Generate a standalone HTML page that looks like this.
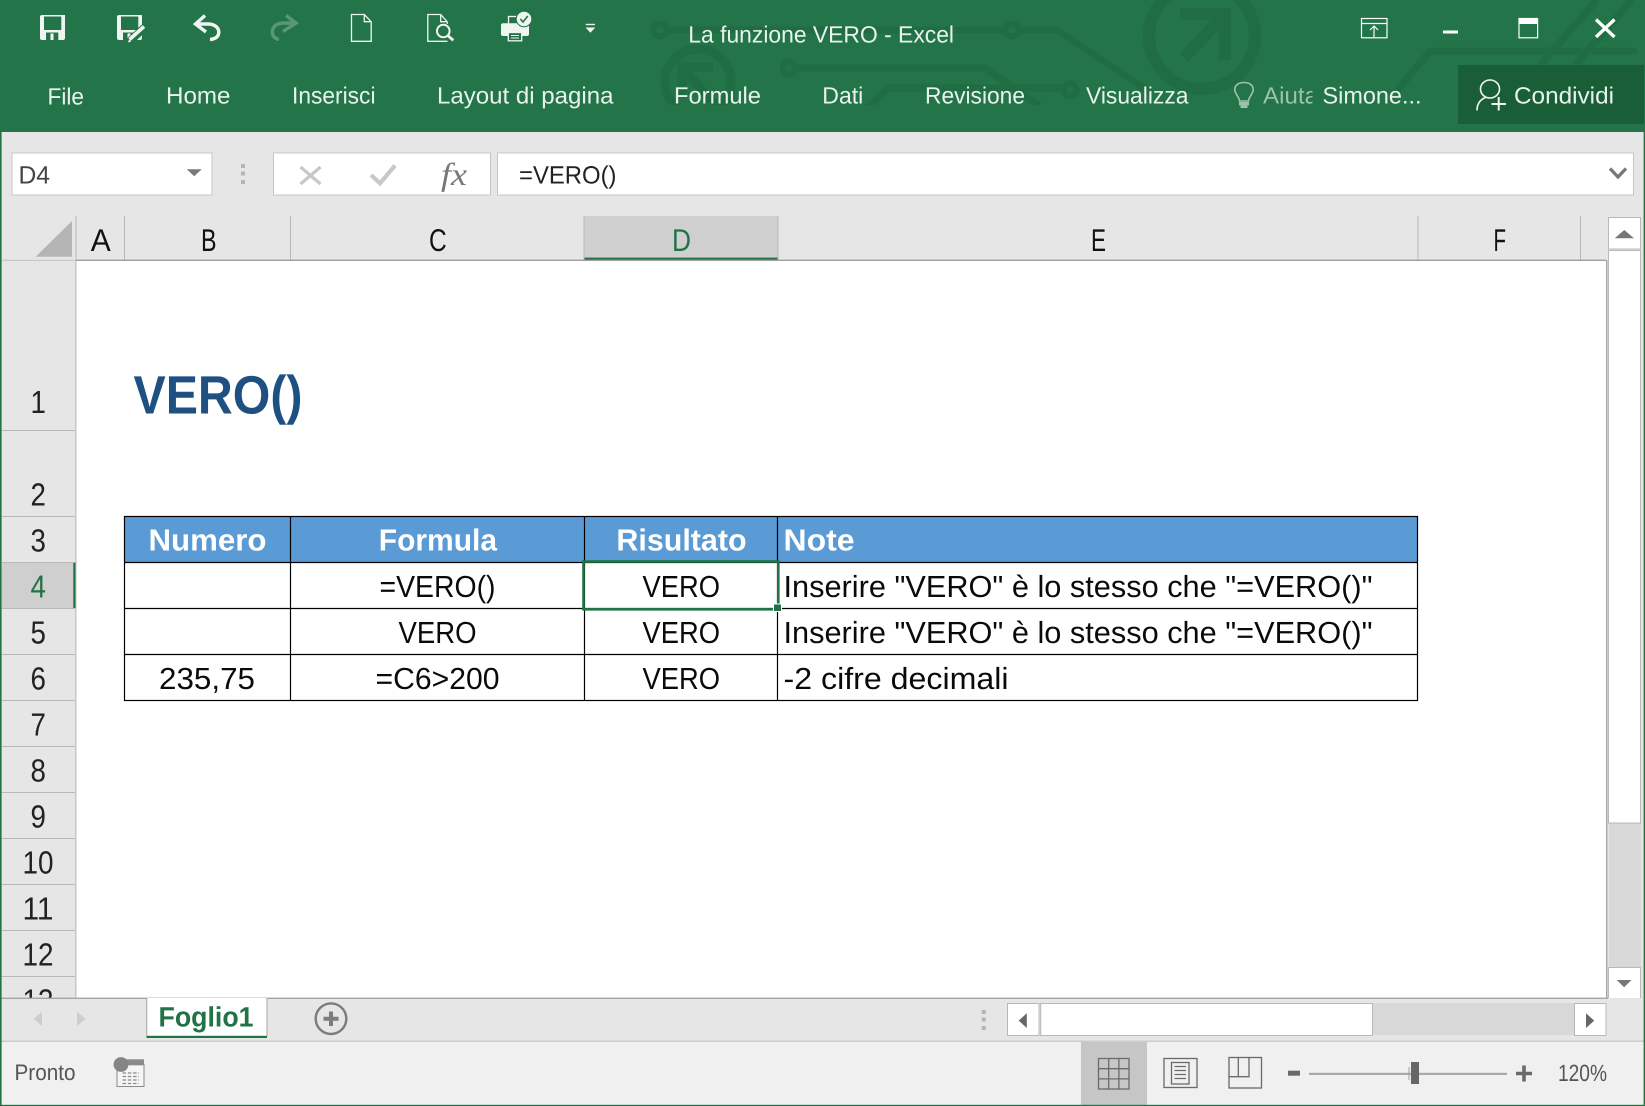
<!DOCTYPE html>
<html lang="it">
<head>
<meta charset="utf-8">
<title>La funzione VERO - Excel</title>
<style>
html,body{margin:0;padding:0;background:#e6e6e6;width:1645px;height:1106px;overflow:hidden}
svg{display:block}
text{font-family:"Liberation Sans",sans-serif;text-rendering:geometricPrecision;white-space:pre}
.rb{font-size:23.5px;fill:#e9f3ed}
.cell{font-size:30.5px;fill:#0a0a0a}
.hd{font-size:30.5px;font-weight:bold;fill:#fff}
.col{font-size:31.5px;fill:#111}
.row{font-size:32px;fill:#222}
</style>
</head>
<body>
<svg xmlns="http://www.w3.org/2000/svg" width="1645" height="1106" viewBox="0 0 1645 1106">
<defs>
<clipPath id="hdr"><rect x="0" y="0" width="1645" height="105"/></clipPath>
<clipPath id="rows"><rect x="0" y="260" width="76" height="738"/></clipPath>
<clipPath id="aiuta"><rect x="1260" y="70" width="52.5" height="50"/></clipPath>
</defs>

<!-- base -->
<rect width="1645" height="1106" fill="#e6e6e6"/>

<!-- title bar -->
<rect width="1645" height="132" fill="#237448"/>
<g clip-path="url(#hdr)" fill="none" stroke="#206c43">
  <path d="M660,30H1057L1150,92" stroke-width="7"/>
  <path d="M789,68H985L1040,106" stroke-width="7"/>
  <path d="M868,108L888,88H1070" stroke-width="7"/>
  <circle cx="660" cy="30" r="6.5" stroke-width="6" fill="#237448"/>
  <circle cx="1012" cy="30" r="6.5" stroke-width="6" fill="#237448"/>
  <circle cx="789" cy="68" r="6.5" stroke-width="6" fill="#237448"/>
  <circle cx="1070" cy="90" r="6.5" stroke-width="6" fill="#237448"/>
  <circle cx="698" cy="82" r="33" stroke-width="9"/>
  <path d="M713,67H682V98M682,67L716,106" stroke-width="9"/>
  <circle cx="1202" cy="36" r="53" stroke-width="12"/>
  <path d="M1180,14H1225V60M1225,14L1184,58" stroke-width="12"/>
  <path d="M1637,51H1430L1396,92" stroke-width="7"/>
  <path d="M1597,0L1540,65M1632,0L1575,65" stroke-width="7"/>
</g>
<rect x="1458" y="65" width="186" height="59" fill="#195e37"/>

<!-- save -->
<path fill-rule="evenodd" fill="#f0f5f1" d="M40,17a2,2 0 0 1 2,-2H65V38a2,2 0 0 1 -2,2H42a2,2 0 0 1 -2,-2ZM44,16.5V30H61.3V16.5ZM46,32.5V40H58.3V32.5Z"/>
<rect x="50.5" y="33.5" width="3" height="6.5" fill="#f0f5f1"/>
<!-- save as -->
<path fill-rule="evenodd" fill="#f0f5f1" d="M117,17a2,2 0 0 1 2,-2H142V38a2,2 0 0 1 -2,2H119a2,2 0 0 1 -2,-2ZM121,16.5V30H138.3V16.5ZM123,32.5V40H135.3V32.5Z"/>
<rect x="127.5" y="33.5" width="3" height="6.5" fill="#f0f5f1"/>
<path d="M129,42L145,27" stroke="#237448" stroke-width="8"/>
<path d="M129.5,39.5L144,26.5" stroke="#f0f5f1" stroke-width="3.6"/>
<path d="M128,42.5l3.2,-1 -2.2,-2z" fill="#f0f5f1"/>
<!-- undo -->
<path d="M205,15.5L195.5,24L206,32M196,24H208C215,24 218.8,28 218.8,32C218.8,37 215,39 210,39.5" fill="none" stroke="#f0f5f1" stroke-width="3.4"/>
<!-- redo -->
<path d="M286,15.5L296,23L283,31.5M296,23H284C276,23 272.3,27 272.3,32C272.3,36 275,38.5 279,39.5" fill="none" stroke="#5a9776" stroke-width="3.4"/>
<!-- new -->
<path d="M351.5,14.5H364.3L371.2,21.7V41.3H351.5ZM364.3,14.5V21.7H371.2" fill="none" stroke="#f0f5f1" stroke-width="1.3"/>
<!-- preview -->
<path d="M447.2,24V21.7L440.7,14.5H427.8V41.3H447.5M440.7,14.5V21.7H447.2" fill="none" stroke="#f0f5f1" stroke-width="1.3"/>
<circle cx="443.3" cy="31" r="6.3" fill="none" stroke="#f0f5f1" stroke-width="2"/>
<path d="M447.8,35.6L453.3,40.3" stroke="#f0f5f1" stroke-width="2.8"/>
<!-- print -->
<rect x="508.5" y="16.5" width="14" height="9" fill="none" stroke="#f0f5f1" stroke-width="1.3"/>
<rect x="501" y="23.3" width="28" height="12.7" rx="2" fill="#f0f5f1"/>
<rect x="508.3" y="32.5" width="13.4" height="8.3" fill="#237448" stroke="#f0f5f1" stroke-width="1.3"/>
<path d="M511,35.5H519M511,38H519" stroke="#f0f5f1" stroke-width="1"/>
<circle cx="524" cy="19" r="7.8" fill="#f0f5f1" stroke="#237448" stroke-width="1"/>
<path d="M520.3,19L523,22L527.8,16" fill="none" stroke="#237448" stroke-width="1.6"/>
<!-- qat dropdown -->
<rect x="585.7" y="23.8" width="9.3" height="1.4" fill="#f0f5f1"/>
<path d="M585.5,27.5H595.3L590.4,32.7Z" fill="#f0f5f1"/>

<text x="688.3" y="42.7" class="rb" textLength="265.7" lengthAdjust="spacingAndGlyphs">La funzione VERO - Excel</text>

<!-- window controls -->
<g fill="none" stroke="#fff" stroke-width="1.2">
  <rect x="1361.5" y="18.5" width="25.5" height="19.3"/>
  <path d="M1361.5,23.5H1387M1374,37V26M1370,30L1374,26L1378,30" />
  <rect x="1519" y="18.5" width="18.6" height="19.3"/>
</g>
<rect x="1519" y="18" width="19" height="6" fill="#fff"/>
<rect x="1443" y="30.5" width="15" height="3" fill="#fff"/>
<path d="M1596,19.5L1614.5,37M1614.5,19.5L1596,37" stroke="#fff" stroke-width="3.3" fill="none"/>

<!-- ribbon tabs -->
<text x="47.5" y="104.7" class="rb" textLength="36.5" lengthAdjust="spacingAndGlyphs">File</text>
<text x="166" y="103.5" class="rb" textLength="64.5" lengthAdjust="spacingAndGlyphs">Home</text>
<text x="292" y="103.5" class="rb" textLength="83.5" lengthAdjust="spacingAndGlyphs">Inserisci</text>
<text x="437" y="103.5" class="rb" textLength="176.5" lengthAdjust="spacingAndGlyphs">Layout di pagina</text>
<text x="674" y="103.5" class="rb" textLength="87" lengthAdjust="spacingAndGlyphs">Formule</text>
<text x="822.3" y="103.5" class="rb" textLength="41" lengthAdjust="spacingAndGlyphs">Dati</text>
<text x="925" y="103.5" class="rb" textLength="100" lengthAdjust="spacingAndGlyphs">Revisione</text>
<text x="1086" y="103.5" class="rb" textLength="102.5" lengthAdjust="spacingAndGlyphs">Visualizza</text>
<!-- bulb -->
<path d="M1239.5,101C1239,96 1234.8,94 1234.8,89.5C1234.8,85 1239,82.5 1244,82.5C1249,82.5 1253.2,85 1253.2,89.5C1253.2,94 1249,96 1248.5,101Z" fill="none" stroke="#9dc2ad" stroke-width="1.6"/>
<rect x="1239" y="102" width="10" height="3.4" fill="#9dc2ad"/>
<rect x="1240.5" y="105.4" width="7" height="2.6" fill="#9dc2ad"/>
<g clip-path="url(#aiuta)"><text x="1263" y="103.5" class="rb" style="fill:#9dc2ad" textLength="55" lengthAdjust="spacingAndGlyphs">Aiuta</text></g>
<text x="1322.5" y="103.5" class="rb" textLength="99" lengthAdjust="spacingAndGlyphs">Simone...</text>
<!-- person -->
<g fill="none" stroke="#eef5f1">
  <ellipse cx="1490" cy="89" rx="9.5" ry="9" stroke-width="1.6"/>
  <path d="M1477,110.5C1477,103.5 1480.5,99.5 1485.5,97.5" stroke-width="1.6"/>
  <path d="M1491.5,104H1506M1498.7,97V110.5" stroke-width="2"/>
</g>
<text x="1514" y="103.5" class="rb" textLength="100" lengthAdjust="spacingAndGlyphs">Condividi</text>

<!-- formula bar -->
<rect x="12" y="153" width="200" height="42" fill="#fff" stroke="#c6c6c6"/>
<text x="18.5" y="183.5" style="font-size:25px;fill:#444" textLength="31.5" lengthAdjust="spacingAndGlyphs">D4</text>
<path d="M186.7,169.3H201.7L194.2,176.3Z" fill="#7a7a7a"/>
<rect x="241" y="164" width="4" height="4" fill="#b5b5b5"/>
<rect x="241" y="171.5" width="4" height="4" fill="#b5b5b5"/>
<rect x="241" y="180" width="4" height="4" fill="#b5b5b5"/>
<rect x="273.5" y="153" width="217" height="42" fill="#fff" stroke="#c6c6c6"/>
<path d="M300.5,167L320.5,184M320.5,167L300.5,184" stroke="#c8c8c8" stroke-width="3.2" fill="none"/>
<path d="M371,175L380,183.3L395,165.5" stroke="#c8c8c8" stroke-width="4.2" fill="none"/>
<text x="441" y="185" style="font-family:'Liberation Serif',serif;font-style:italic;font-size:32px;fill:#777" textLength="26" lengthAdjust="spacingAndGlyphs">fx</text>
<rect x="497.5" y="153" width="1136" height="42" fill="#fff" stroke="#c6c6c6"/>
<text x="519" y="183.5" style="font-size:25px;fill:#222" textLength="97.5" lengthAdjust="spacingAndGlyphs">=VERO()</text>
<path d="M1610,168.5L1618,177L1626,168.5" stroke="#777" stroke-width="3.2" fill="none"/>

<!-- column headers -->
<rect x="584" y="216" width="194" height="44" fill="#cfcfcf"/>
<rect x="584" y="257.6" width="194" height="3" fill="#217346"/>
<g stroke="#b8b8b8" stroke-width="1">
  <path d="M76,216V260M124.5,216V260M290.5,216V260M584,216V260M778,216V260M1418,216V260M1580.5,216V260"/>
</g>
<path d="M35.7,256.7H72V221Z" fill="#b5b5b5"/>
<rect x="76" y="259.6" width="1530" height="1.4" fill="#9e9e9e"/>
<rect x="2" y="259.8" width="74" height="1" fill="#c2c2c2"/>
<text x="90.7" y="251" class="col" textLength="20" lengthAdjust="spacingAndGlyphs">A</text>
<text x="201" y="251" class="col" textLength="15.5" lengthAdjust="spacingAndGlyphs">B</text>
<text x="429" y="251" class="col" textLength="17.7" lengthAdjust="spacingAndGlyphs">C</text>
<text x="672" y="251" class="col" style="fill:#217346" textLength="19" lengthAdjust="spacingAndGlyphs">D</text>
<text x="1091" y="251" class="col" textLength="15" lengthAdjust="spacingAndGlyphs">E</text>
<text x="1493.5" y="251" class="col" textLength="12.5" lengthAdjust="spacingAndGlyphs">F</text>

<!-- sheet -->
<rect x="76" y="261" width="1530" height="737" fill="#fff"/>
<rect x="1606" y="260" width="1.4" height="738" fill="#a5a5a5"/>

<!-- row headers -->
<rect x="2" y="562" width="72" height="46" fill="#cfcfcf"/>
<rect x="73.3" y="562" width="2.6" height="46" fill="#217346"/>
<rect x="75.4" y="261" width="1" height="737" fill="#b5b5b5"/>
<g stroke="#b8b8b8" stroke-width="1">
  <path d="M2,430.5H75M2,516.5H75M2,562.5H75M2,608.5H75M2,654.5H75M2,700.5H75M2,746.5H75M2,792.5H75M2,838.5H75M2,884.5H75M2,930.5H75M2,976.5H75"/>
</g>
<g clip-path="url(#rows)">
  <text x="30.5" y="413" class="row" textLength="15.4" lengthAdjust="spacingAndGlyphs">1</text>
  <text x="30.5" y="505.7" class="row" textLength="15.4" lengthAdjust="spacingAndGlyphs">2</text>
  <text x="30.5" y="551.7" class="row" textLength="15.4" lengthAdjust="spacingAndGlyphs">3</text>
  <text x="30.5" y="597.7" class="row" style="fill:#217346" textLength="15.4" lengthAdjust="spacingAndGlyphs">4</text>
  <text x="30.5" y="643.7" class="row" textLength="15.4" lengthAdjust="spacingAndGlyphs">5</text>
  <text x="30.5" y="689.7" class="row" textLength="15.4" lengthAdjust="spacingAndGlyphs">6</text>
  <text x="30.5" y="735.7" class="row" textLength="15.4" lengthAdjust="spacingAndGlyphs">7</text>
  <text x="30.5" y="781.7" class="row" textLength="15.4" lengthAdjust="spacingAndGlyphs">8</text>
  <text x="30.5" y="827.7" class="row" textLength="15.4" lengthAdjust="spacingAndGlyphs">9</text>
  <text x="22.5" y="873.7" class="row" textLength="31" lengthAdjust="spacingAndGlyphs">10</text>
  <text x="22.5" y="919.7" class="row" textLength="31" lengthAdjust="spacingAndGlyphs">11</text>
  <text x="22.5" y="965.7" class="row" textLength="31" lengthAdjust="spacingAndGlyphs">12</text>
  <text x="22.5" y="1011.7" class="row" textLength="31" lengthAdjust="spacingAndGlyphs">13</text>
</g>

<!-- title cell -->
<text x="133.5" y="413.3" style="font-size:54px;font-weight:bold;fill:#1f5082" textLength="169" lengthAdjust="spacingAndGlyphs">VERO()</text>

<!-- table -->
<rect x="124.5" y="516.5" width="1293" height="46" fill="#5b9bd5"/>
<g stroke="#000" stroke-width="1.2" fill="none">
  <rect x="124.5" y="516.5" width="1293" height="184"/>
  <path d="M124.5,562.5H1417.5M124.5,608.5H1417.5M124.5,654.5H1417.5"/>
  <path d="M290.5,516.5V700.5M584.5,516.5V700.5M777.5,516.5V700.5"/>
</g>
<text x="148.5" y="550.7" class="hd" textLength="118" lengthAdjust="spacingAndGlyphs">Numero</text>
<text x="378.8" y="550.7" class="hd" textLength="118.2" lengthAdjust="spacingAndGlyphs">Formula</text>
<text x="616.4" y="550.7" class="hd" textLength="130.2" lengthAdjust="spacingAndGlyphs">Risultato</text>
<text x="783.5" y="550.7" class="hd" textLength="71" lengthAdjust="spacingAndGlyphs">Note</text>

<text x="379.5" y="597" class="cell" textLength="116" lengthAdjust="spacingAndGlyphs">=VERO()</text>
<text x="642.5" y="597" class="cell" textLength="77.5" lengthAdjust="spacingAndGlyphs">VERO</text>
<text x="783.5" y="597" class="cell" textLength="589" lengthAdjust="spacingAndGlyphs">Inserire "VERO" è lo stesso che "=VERO()"</text>

<text x="398.5" y="643" class="cell" textLength="78" lengthAdjust="spacingAndGlyphs">VERO</text>
<text x="642.5" y="643" class="cell" textLength="77.5" lengthAdjust="spacingAndGlyphs">VERO</text>
<text x="783.5" y="643" class="cell" textLength="589" lengthAdjust="spacingAndGlyphs">Inserire "VERO" è lo stesso che "=VERO()"</text>

<text x="159" y="689" class="cell" textLength="96" lengthAdjust="spacingAndGlyphs">235,75</text>
<text x="375.5" y="689" class="cell" textLength="124" lengthAdjust="spacingAndGlyphs">=C6&gt;200</text>
<text x="642.5" y="689" class="cell" textLength="77.5" lengthAdjust="spacingAndGlyphs">VERO</text>
<text x="783.5" y="689" class="cell" textLength="225" lengthAdjust="spacingAndGlyphs">-2 cifre decimali</text>

<!-- selection -->
<rect x="583.5" y="561.5" width="194.8" height="47.8" fill="none" stroke="#217346" stroke-width="2.6"/>
<rect x="773.5" y="604" width="8" height="7.5" fill="#217346" stroke="#fff" stroke-width="1"/>

<!-- vertical scrollbar -->
<rect x="1608.5" y="217.5" width="32" height="31.5" fill="#fff" stroke="#b8b8b8"/>
<path d="M1614.7,238.3H1634L1624.3,230Z" fill="#777"/>
<rect x="1609" y="250" width="32" height="717" fill="#d8d8d8"/>
<rect x="1608.5" y="250.5" width="32" height="572.5" fill="#fff" stroke="#b8b8b8"/>
<rect x="1608.5" y="967.5" width="32" height="31.5" fill="#fff" stroke="#b8b8b8"/>
<path d="M1616.7,980H1631.5L1624.1,987.3Z" fill="#777"/>

<!-- tab bar -->
<rect x="0" y="998" width="1645" height="43" fill="#e6e6e6"/>
<rect x="0" y="997.6" width="1608" height="1.4" fill="#a5a5a5"/>
<rect x="0" y="1040.6" width="1645" height="1.2" fill="#c6c6c6"/>
<path d="M42,1011.7V1026L33.5,1018.8Z" fill="#cdcdcd"/>
<path d="M77,1011.7V1026L85.5,1018.8Z" fill="#cdcdcd"/>
<rect x="146.5" y="998" width="120.5" height="39.5" fill="#fff"/>
<rect x="146.5" y="1035.8" width="120.5" height="2.2" fill="#217346"/>
<rect x="146.3" y="998" width="1" height="38" fill="#a5a5a5"/>
<rect x="266.5" y="998" width="1" height="38" fill="#a5a5a5"/>
<text x="158.5" y="1026.7" style="font-size:28px;font-weight:bold;fill:#217346" textLength="95" lengthAdjust="spacingAndGlyphs">Foglio1</text>
<circle cx="331" cy="1018.7" r="15.3" fill="none" stroke="#7c7c7c" stroke-width="2.4"/>
<path d="M323.5,1018.7H338.5M331,1011.5V1026" stroke="#7c7c7c" stroke-width="4" fill="none"/>

<rect x="981.7" y="1010" width="4" height="4" fill="#b5b5b5"/>
<rect x="981.7" y="1017.5" width="4" height="4" fill="#b5b5b5"/>
<rect x="981.7" y="1026" width="4" height="4" fill="#b5b5b5"/>

<rect x="1040" y="1003" width="534" height="32" fill="#d8d8d8"/>
<rect x="1007.5" y="1003.5" width="31.5" height="32" fill="#fff" stroke="#b8b8b8"/>
<path d="M1026.8,1013.3V1028L1018.7,1020.6Z" fill="#666"/>
<rect x="1040.7" y="1003.5" width="331.8" height="32" fill="#fff" stroke="#b8b8b8"/>
<rect x="1574.5" y="1003.5" width="31.5" height="32" fill="#fff" stroke="#b8b8b8"/>
<path d="M1586,1013.3V1028L1594.2,1020.6Z" fill="#666"/>

<!-- status bar -->
<rect x="0" y="1042" width="1645" height="64" fill="#f0f0f0"/>
<text x="14.5" y="1080" style="font-size:22.5px;fill:#555" textLength="61" lengthAdjust="spacingAndGlyphs">Pronto</text>
<rect x="117" y="1064.5" width="27" height="22" fill="#f5f5f5" stroke="#8a8a8a"/>
<rect x="126" y="1059.3" width="18" height="6" fill="#8a8a8a"/>
<circle cx="121" cy="1064.5" r="7.4" fill="#858585"/>
<g stroke="#8a8a8a" stroke-width="1.2" stroke-dasharray="3.5 1.8">
  <path d="M122.5,1073H139M122.5,1076.5H139M122.5,1080H139M122.5,1083.5H139"/>
</g>

<rect x="1081" y="1042" width="66" height="63" fill="#c6c6c6"/>
<g fill="none" stroke="#6a6a6a" stroke-width="1.3">
  <rect x="1098.5" y="1058.5" width="30.5" height="30.5"/>
  <path d="M1108.7,1058.5V1089M1118.9,1058.5V1089M1098.5,1068.7H1129M1098.5,1078.9H1129"/>
  <rect x="1164" y="1058.5" width="33" height="29"/>
  <rect x="1171.5" y="1062.5" width="17.5" height="21.5"/>
  <path d="M1174.5,1066.5H1186M1174.5,1070.5H1186M1174.5,1074.5H1186M1174.5,1078.5H1186" />
  <rect x="1229" y="1057.5" width="32.5" height="30.5"/>
  <path d="M1229,1076.7H1249V1057.5M1238.3,1057.5V1076.7"/>
</g>
<rect x="1288" y="1070.7" width="12" height="5" fill="#6a6a6a"/>
<rect x="1309" y="1072.8" width="198" height="2.2" fill="#a9a9a9"/>
<rect x="1408.5" y="1067" width="1" height="13" fill="#a0a0a0"/>
<rect x="1411" y="1062" width="8" height="22" fill="#666"/>
<path d="M1516,1073.5H1532M1524,1065.5V1081.5" stroke="#6a6a6a" stroke-width="3.6" fill="none"/>
<text x="1558" y="1081" style="font-size:23.5px;fill:#555" textLength="49" lengthAdjust="spacingAndGlyphs">120%</text>

<!-- window frame -->
<rect x="0" y="132" width="1.6" height="974" fill="#217346"/>
<rect x="1643.6" y="132" width="1.4" height="974" fill="#217346"/>
<rect x="0" y="1104.8" width="1645" height="1.2" fill="#217346"/>
</svg>
</body>
</html>
